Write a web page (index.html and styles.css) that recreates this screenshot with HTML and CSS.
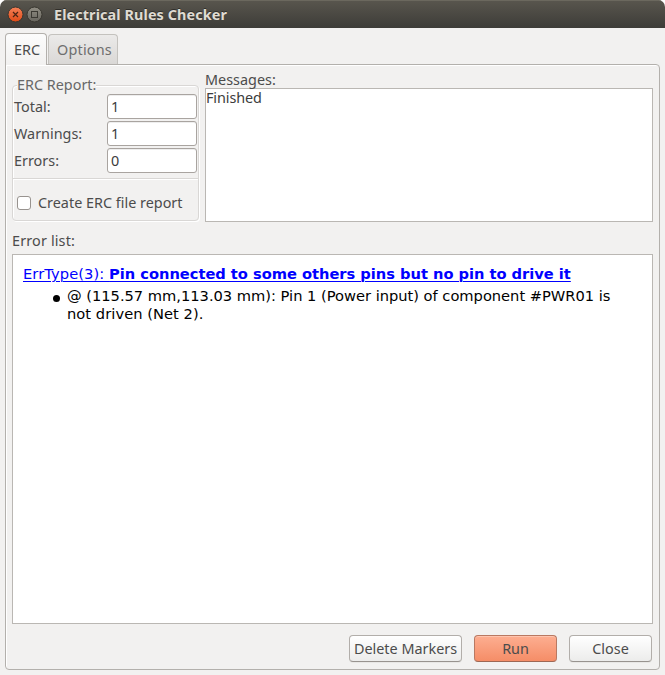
FILE: index.html
```html
<!DOCTYPE html>
<html lang="en">
<head>
<meta charset="utf-8">
<title>Electrical Rules Checker</title>
<link rel="stylesheet" href="styles.css">
</head>
<body>
<div class="window">
  <header class="titlebar">
    <svg class="controls" width="40" height="20" viewBox="0 0 40 20" aria-hidden="true">
      <defs>
        <linearGradient id="orange" x2="0" y2="1"><stop stop-color="#f58158"/><stop offset="1" stop-color="#df4a16"/></linearGradient>
        <linearGradient id="gray" x2="0" y2="1"><stop stop-color="#918e84"/><stop offset="1" stop-color="#66645d"/></linearGradient>
      </defs>
      <circle cx="10.5" cy="10.5" r="7.5" fill="url(#orange)" stroke="#38362f"/>
      <path d="M8 8l5 5M13 8l-5 5" stroke="#4a2414" stroke-width="1.2"/>
      <circle cx="29.5" cy="10.5" r="7.5" fill="url(#gray)" stroke="#38362f"/>
      <rect x="26.5" y="7.5" width="6" height="6" fill="none" stroke="#3b3933"/>
    </svg>
    <h1 class="title">Electrical Rules Checker</h1>
  </header>
  <nav class="tabs">
    <div class="tab tab-active"><span>ERC</span></div>
    <div class="tab"><span class="t-options">Options</span></div>
  </nav>
  <main class="panel">
    <div class="top">
      <section class="report">
        <h2 class="legend"><span>ERC Report:</span></h2>
        <div class="field"><span>Total:</span><div class="input">1</div></div>
        <div class="field"><span>Warnings:</span><div class="input">1</div></div>
        <div class="field"><span>Errors:</span><div class="input">0</div></div>
        <div class="option"><i class="checkbox"></i><span class="t-create">Create ERC file report</span></div>
      </section>
      <section class="messages">
        <div class="messages-label"><span>Messages:</span></div>
        <div class="messages-box"><span class="t-finished">Finished</span></div>
      </section>
    </div>
    <div class="list-label"><span class="t-list">Error list:</span></div>
    <section class="list">
      <div class="error"><span class="t-type">ErrType(3): </span><b class="t-pin">Pin connected to some others pins but no pin to drive it</b></div>
      <div class="detail"><i class="bullet"></i><div><span class="t-line">@ (115.57 mm,113.03 mm): Pin 1 (Power input) of component #PWR01 is</span><br><span class="t-net">not driven (Net 2).</span></div></div>
    </section>
    <footer class="buttons">
      <div class="button button-wide"><span>Delete Markers</span></div>
      <div class="button button-run"><span>Run</span></div>
      <div class="button"><span>Close</span></div>
    </footer>
  </main>
</div>
</body>
</html>
```
FILE: styles.css
```css
* { box-sizing: border-box; }
body { margin: 0; background: #fff; }
.window {
  width: 665px; height: 675px; display: flex; flex-direction: column;
  background: #f2f1f0; color: #4c4c4c; border-radius: 7px 7px 0 0; overflow: hidden;
  font: 14.4px/20px "Noto Sans", sans-serif;
}
span, b { white-space: pre; }
h1, h2 { margin: 0; font-size: inherit; }
.titlebar {
  height: 28px; flex: none; display: flex; padding: 4px 0 0 5px;
  background: linear-gradient(#59564e, #3d3c38); box-shadow: inset 0 1px #6b685e;
}
.title { margin-left: 9px; padding-top: 1px; color: #dfdbd2; line-height: 20px; letter-spacing: .1px; text-shadow: 0 -1px #302f2b; }
.tabs { height: 37px; flex: none; margin-bottom: -1px; padding: 5px 0 0 5px; display: flex; gap: 1px; z-index: 1; align-items: flex-end; }
.tab {
  width: 70px; height: 30px; margin-bottom: 1px; padding: 5px 0 0 8px;
  border: 1px solid #c4c2be; border-bottom: 0; border-radius: 4px 4px 0 0;
  background: linear-gradient(#ebeae9, #dad8d6); color: #6e6e6e;
}
.tab-active { width: 42px; height: 32px; margin-bottom: 0; padding-top: 6px; border-color: #b3b0ac; background: linear-gradient(#fcfcfc, #f2f1f0); color: #4c4c4c; }
.t-options { letter-spacing: .2px; }
.panel {
  width: 655px; height: 606px; margin-left: 5px; padding: 6px 6px 0;
  border: 1px solid #b3b0ac; border-radius: 0 4px 4px 4px; box-shadow: inset 1px 1px #fff;
}
.top { display: flex; gap: 6px; height: 151px; }
.report {
  width: 187px; height: 136px; margin-top: 14px; border: 1px solid #d9d7d5; border-radius: 4px;
  box-shadow: 1px 1px #fff, inset 1px 1px #fff;
}
.legend { height: 8px; display: flex; padding-left: 4px; color: #686868; font-weight: normal; line-height: 20px; }
.legend span { height: 20px; margin-top: -11px; background: #f2f1f0; }
.field { display: flex; justify-content: space-between; align-items: center; height: 25px; margin: 0 1px 2px; }
.input {
  width: 90px; height: 25px; padding: 2px 3px; border: 1px solid #a9a4a0; border-radius: 3px;
  background: #fff; color: #3c3c3c; box-shadow: inset 0 1px #eee;
}
.option { display: flex; align-items: center; height: 41px; margin-top: 5px; padding: 7px 0 0 4px; border-top: 1px solid #d9d7d5; box-shadow: inset 0 1px #fff; }
.checkbox { width: 14px; height: 14px; margin-right: 7px; border: 1px solid #98938f; border-radius: 3px; background: #fff; }
.messages { width: 448px; }
.messages-label { height: 17px; line-height: 18px; }
.messages-box { height: 134px; border: 1px solid #bab7b3; background: #fff; color: #3c3c3c; line-height: 18px; }
.t-finished { letter-spacing: -.1px; }
.list-label { height: 32px; padding-top: 9px; letter-spacing: .15px; }
.list { height: 370px; border: 1px solid #bab7b3; background: #fff; color: #000; padding: 10px; font: 14.67px/18px "DejaVu Sans", sans-serif; }
.error { color: #00f; text-decoration: underline; text-underline-offset: 2px; text-decoration-thickness: 1px; height: 22px; }
.t-type { letter-spacing: .08px; }
.t-pin { letter-spacing: -.02px; }
.detail { display: flex; padding-left: 30px; }
.bullet { width: 7px; height: 7px; margin: 8px 7px 0 0; border-radius: 50%; background: #000; }
.t-line { letter-spacing: -.015px; }
.t-net { letter-spacing: .05px; }
.buttons { display: flex; gap: 12px; justify-content: flex-end; padding: 11px 1px 0 0; }
.button {
  width: 83px; height: 27px; display: flex; justify-content: center; line-height: 26px;
  border: 1px solid #b2aeaa; border-bottom-color: #98938f; border-radius: 4px;
  background: linear-gradient(#fff, #ececeb); box-shadow: 0 1px #e8e7e5, inset 0 1px #fff;
}
.button-wide { width: 113px; }
.button-run { border-color: #b97962; border-bottom-color: #9d6754; background: linear-gradient(#fdae91, #f58d67); box-shadow: inset 0 1px #ffc4ae; }
```
